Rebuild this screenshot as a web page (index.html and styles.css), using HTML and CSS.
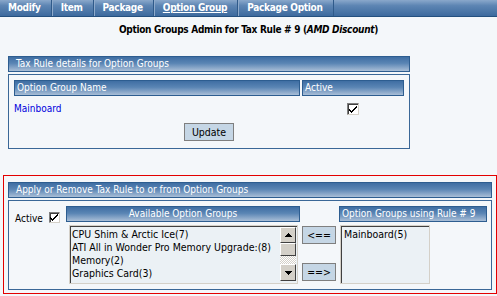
FILE: index.html
```html
<!DOCTYPE html>
<html lang="en">
<head>
    <meta charset="UTF-8">
    <title>Option Groups Admin</title>
    <link rel="stylesheet" href="styles.css">
</head>
<body>

    <div class="nav">
        <a href="#" class="nav-item">Modify</a>
        <a href="#" class="nav-item">Item</a>
        <a href="#" class="nav-item">Package</a>
        <a href="#" class="nav-item current">Option Group</a>
        <a href="#" class="nav-item">Package Option</a>
    </div>

    <h1 class="page-title">Option Groups Admin for Tax Rule # 9 (<i>AMD Discount</i>)</h1>

    <div class="section details">
        <div class="bar">Tax Rule details for Option Groups</div>
        <div class="panel">
            <table class="grid">
                <tr>
                    <th class="bar name-col">Option Group Name</th>
                    <th class="bar">Active</th>
                </tr>
                <tr class="data-row">
                    <td><a href="#" class="group-link">Mainboard</a></td>
                    <td class="center"><span class="check"><svg width="8" height="7" viewBox="0 0 8 7"><path d="M0 3h1v1h1v1h1V4h1V3h1V2h1V1h1V0h1v2H7v1H6v1H5v1H4v1H3v1H2V6H1V5H0z" fill="#000"/></svg></span></td>
                </tr>
                <tr class="button-row">
                    <td colspan="2" class="center"><button class="btn">Update</button></td>
                </tr>
            </table>
        </div>
    </div>

    <div class="section assign">
        <div class="bar">Apply or Remove Tax Rule to or from Option Groups</div>
        <div class="panel assign-panel">
            <div class="active-col">
                <span class="active-label">Active</span>
                <span class="check"><svg width="8" height="7" viewBox="0 0 8 7"><path d="M0 3h1v1h1v1h1V4h1V3h1V2h1V1h1V0h1v2H7v1H6v1H5v1H4v1H3v1H2V6H1V5H0z" fill="#000"/></svg></span>
            </div>
            <div class="list-col available">
                <div class="bar centered">Available Option Groups</div>
                <div class="listbox">
                    <div class="items">
                        <div>CPU Shim &amp; Arctic Ice(7)</div>
                        <div>ATI All in Wonder Pro Memory Upgrade:(8)</div>
                        <div>Memory(2)</div>
                        <div>Graphics Card(3)</div>
                    </div>
                    <div class="scrollbar">
                        <span class="sb-btn"><svg width="7" height="4" viewBox="0 0 7 4"><path d="M3 0h1v1h1v1h1v1h1v1H0V3h1V2h1V1h1z"/></svg></span>
                        <span class="sb-thumb"></span>
                        <span class="sb-track"></span>
                        <span class="sb-btn down"><svg width="7" height="4" viewBox="0 0 7 4"><path d="M0 0h7v1H6v1H5v1H4v1H3V3H2V2H1V1H0z"/></svg></span>
                    </div>
                </div>
            </div>
            <div class="move-col">
                <button class="btn arrow">&lt;==</button>
                <button class="btn arrow">==&gt;</button>
            </div>
            <div class="list-col using">
                <div class="bar">Option Groups using Rule # 9</div>
                <div class="listbox small">
                    <div class="items">
                        <div>Mainboard(5)</div>
                    </div>
                </div>
            </div>
        </div>
    </div>

</body>
</html>
```

FILE: styles.css
```css
body {
    margin: 0;
    background-color: #f4f7fa;
    font-family: "DejaVu Sans Condensed", "DejaVu Sans", sans-serif;
    font-stretch: condensed;
    font-size: 10px;
    color: #000;
}

.nav {
    display: flex;
    height: 16px;
    background: linear-gradient(#8aa8cb, #5d85b3 35%, #3d6a9e);
    border-bottom: 1px solid #24507f;
}

.nav-item {
    padding: 0 10px 0 8px;
    border-left: 1px solid #8eaacb;
    border-right: 1px solid #2f5a8a;
    color: #fff;
    font-weight: bold;
    letter-spacing: -0.3px;
    line-height: 16px;
    text-decoration: none;
}

.nav-item:first-child {
    border-left: none;
}

.nav-item.current {
    text-decoration: underline;
}

.page-title {
    margin: 6px 0 19px 0;
    font-size: 10px;
    letter-spacing: -0.3px;
    line-height: 14px;
    text-align: center;
}

.section {
    margin-left: 8px;
}

.details {
    width: 402px;
}

.bar {
    box-sizing: border-box;
    height: 16px;
    line-height: 14px;
    padding: 0 7px;
    border: 1px solid #2d5d90;
    background: linear-gradient(#3f6ea3, #5a85b4 45%, #a9bed7);
    color: #fff;
    font-weight: normal;
    text-align: left;
    white-space: nowrap;
    overflow: hidden;
}

.panel {
    margin-top: 2px;
    border: 1px solid #3a6797;
}

.grid {
    border-spacing: 2px;
    margin: 3px;
    width: 394px;
}

.grid th {
    padding: 0 2px;
}

.grid td {
    padding: 0;
}

.name-col {
    width: 286px;
}

.data-row td {
    height: 22px;
    vertical-align: middle;
}

.button-row td {
    height: 21px;
    vertical-align: top;
}

.center {
    text-align: center;
}

.group-link {
    color: #0000dd;
    text-decoration: none;
    line-height: 12px;
}

.check {
    display: inline-flex;
    align-items: center;
    justify-content: center;
    box-sizing: border-box;
    width: 12px;
    height: 12px;
    background: #fff;
    border: 1px solid;
    border-color: #808080 #d4d0c8 #d4d0c8 #808080;
    box-shadow: inset 1px 1px 0 #404040;
    vertical-align: middle;
}

.btn {
    box-sizing: border-box;
    height: 18px;
    padding: 0;
    border: 1px solid #7f7f7f;
    background: #c5d6e5;
    font-family: "DejaVu Sans Condensed", "DejaVu Sans", sans-serif;
    font-stretch: condensed;
    font-size: 10.5px;
    color: #000;
}

.button-row .btn {
    width: 50px;
    margin-top: 1px;
}

.assign {
    margin: 26px 0 0 3px;
    padding: 6px 4px 3px 4px;
    border: 1px solid #e30000;
    width: 484px;
}

.assign-panel {
    display: flex;
    height: 88px;
}

.active-col {
    display: flex;
    align-items: flex-end;
    align-self: flex-start;
    width: 51px;
    height: 11px;
    padding: 11px 0 0 6px;
}

.active-label {
    line-height: 12px;
    margin-bottom: -2px;
    margin-right: 6px;
}

.active-col .check {
    width: 11px;
    height: 11px;
}

.list-col {
    padding-top: 5px;
}

.available {
    width: 234px;
}

.bar.centered {
    text-align: center;
}

.listbox {
    display: flex;
    box-sizing: border-box;
    height: 59px;
    margin: 3px 2px 0 3px;
    border: 1px solid #d4d0c8;
    box-shadow: inset 1px 1px 0 #404040;
    background: #ebf1f5;
    font-size: 10.5px;
    line-height: 13px;
}

.items {
    flex: 1;
    padding: 2px 0 0 2px;
    white-space: nowrap;
    overflow: hidden;
}

.scrollbar {
    display: flex;
    flex-direction: column;
    width: 16px;
    margin: 1px 1px 2px 0;
}

.sb-btn,
.sb-thumb {
    display: flex;
    align-items: center;
    justify-content: center;
    box-sizing: border-box;
    height: 16px;
    background: #d4d0c8;
    border: 1px solid;
    border-color: #fff #404040 #404040 #fff;
}

.sb-btn.down {
    height: 17px;
}

.sb-thumb {
    height: 13px;
}

.sb-track {
    flex: 1;
    background: repeating-conic-gradient(#d4d0c8 0 25%, #fff 0 50%) 0 0 / 2px 2px;
}

.move-col {
    display: flex;
    flex-direction: column;
    justify-content: space-between;
    width: 34px;
    padding: 25px 3px 8px 2px;
}

.arrow {
    width: 34px;
}

.using {
    width: 148px;
}

.using .bar {
    padding-left: 2px;
}

.listbox.small {
    width: 90px;
    margin-left: 1px;
}

.listbox.small .items {
    padding-left: 3px;
}
```
